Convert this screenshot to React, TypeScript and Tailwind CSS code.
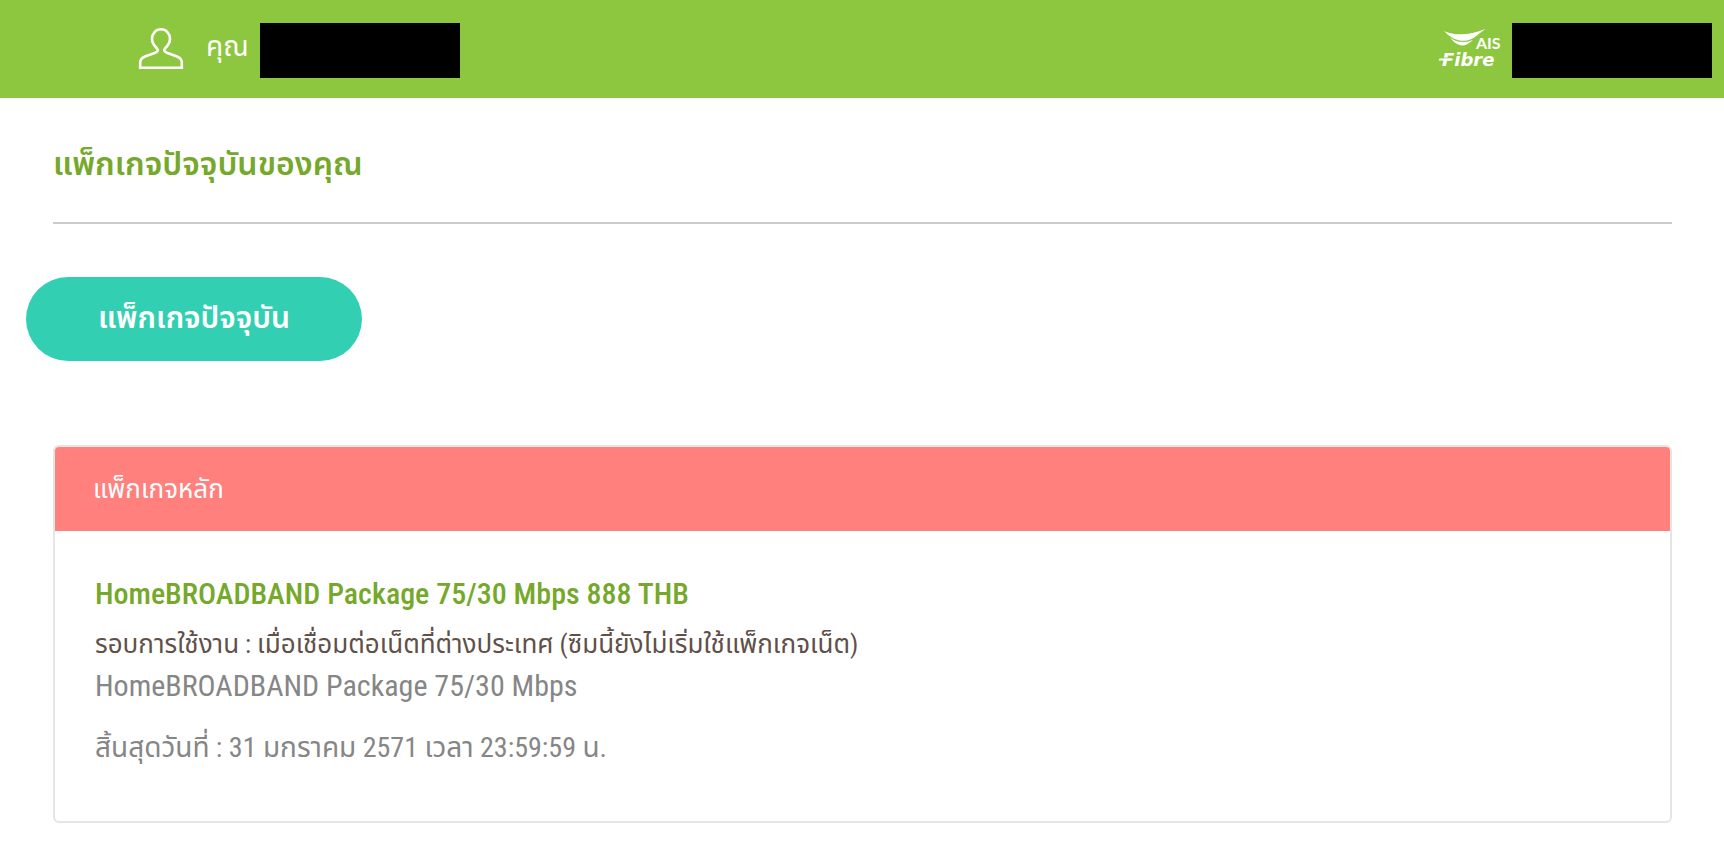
import React from "react";

function UserIcon() {
  return (
    <svg className="mb-1 h-[42px] w-[46px] shrink-0" viewBox="0 0 46 42" fill="none" stroke="white" strokeWidth="2.6" aria-hidden="true">
      <path d="M2.2 39.700 V34.500 Q2.200 30.500 7 28.500 L16.500 25 Q21.500 23 19 20.500 C15.500 17 14 14.500 14 11 C14 5.500 17.800 1.300 23 1.300 C28.200 1.300 32 5.500 32 11 C32 14.500 30.500 17 27 20.500 Q24.500 23 29.500 25 L39 28.500 Q43.800 30.500 43.800 34.500 V39.700 Z" />
    </svg>
  );
}

function FibreLogo() {
  return (
    <svg className="h-11 w-17 shrink-0" viewBox="0 0 68 44" fill="white" role="img" aria-label="AIS Fibre">
      <path d="M7 2 C19 7.500 34 6 49.500 -0.500 C41.500 4 36.500 12 26 12.500 C17.500 12 12 7 7 2 Z" />
      <path d="M13 8.500 Q24 16.500 36 10.700 Q30.500 16.500 25 16.500 Q18.500 16 13 8.500 Z" />
      <path d="M11.500 6.900 Q23.500 16 36.500 10" fill="none" stroke="#8dc63f" strokeWidth="0.8" />
      <text x="39" y="20" fontFamily="Lato, sans-serif" fontSize="16" fontWeight="700">AIS</text>
      <text x="5" y="36.500" fontFamily="'DejaVu Sans', sans-serif" fontSize="18" fontWeight="700" fontStyle="italic">
        Fibre
      </text>
      <path d="M4 29 H18" stroke="#8dc63f" strokeWidth="1" />
      <path d="M2.500 29.500 H14 L13.500 31.500 H1.500 Z" />
    </svg>
  );
}

export default function App() {
  return (
    <div className="min-h-screen bg-white font-['Roboto_Condensed','Roboto','Noto_Sans_Thai','Noto_Sans',sans-serif]">
      <header className="flex h-[98px] items-center justify-between bg-[#8dc63f] pt-[3px] pr-3 pl-[138px] text-white">
        <div className="flex items-center">
          <UserIcon />
          <span className="ml-[22px] w-[54px] pb-2 text-[28px] whitespace-nowrap">คุณ</span>
          <div className="h-[55px] w-[200px] bg-black" />
        </div>
        <div className="flex items-center gap-[7px]">
          <FibreLogo />
          <div className="h-[55px] w-[200px] bg-black" />
        </div>
      </header>

      <main className="pr-[52px] pl-[53px]">
        <h1 className="flex h-[126px] items-center border-b-2 border-[#cccccc] pt-2 text-[32px] font-semibold text-[#75a82b]">
          แพ็กเกจปัจจุบันของคุณ
        </h1>

        <button type="button" className="mt-[53px] -ml-[27px] block h-[84px] w-[336px] rounded-full bg-[#33cfb2] pb-1 text-[30px] font-semibold text-white">
          แพ็กเกจปัจจุบัน
        </button>

        <section className="mt-[84px] overflow-hidden rounded-md border-2 border-[#e5e5e5]">
          <h2 className="flex h-[84px] items-center bg-[#ff807d] pl-[38px] text-[26px] text-white">แพ็กเกจหลัก</h2>
          <div className="px-10 pt-[42px] pb-[52px] text-[30px] leading-[42px] text-[#868686]">
            <h3 className="mb-2 font-medium text-[#75a82b]">HomeBROADBAND Package 75/30 Mbps 888 THB</h3>
            <p className="text-[26px] text-[#605048]">รอบการใช้งาน : เมื่อเชื่อมต่อเน็ตที่ต่างประเทศ (ซิมนี้ยังไม่เริ่มใช้แพ็กเกจเน็ต)</p>
            <p>HomeBROADBAND Package 75/30 Mbps</p>
            <p className="mt-5 text-[28px]">สิ้นสุดวันที่ : 31 มกราคม 2571 เวลา 23:59:59 น.</p>
          </div>
        </section>
      </main>
    </div>
  );
}
